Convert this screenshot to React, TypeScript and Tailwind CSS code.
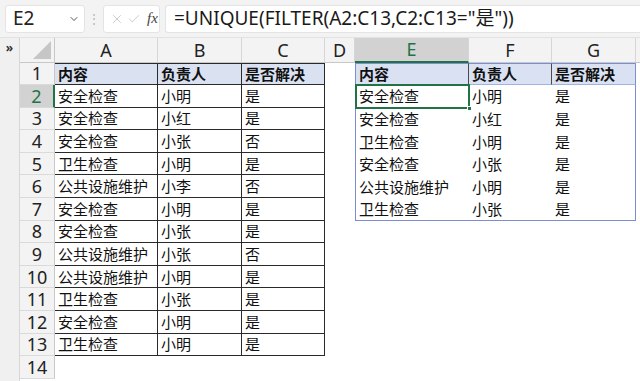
import { ChevronDown, X, Check } from 'lucide-react'

const cjk = "font-['Noto_Sans','Noto_Sans_CJK_SC',sans-serif]"

const leftRows = [
  ['安全检查', '小明', '是'],
  ['安全检查', '小红', '是'],
  ['安全检查', '小张', '否'],
  ['卫生检查', '小明', '是'],
  ['公共设施维护', '小李', '否'],
  ['安全检查', '小明', '是'],
  ['安全检查', '小张', '是'],
  ['公共设施维护', '小张', '否'],
  ['公共设施维护', '小明', '是'],
  ['卫生检查', '小张', '是'],
  ['安全检查', '小明', '是'],
  ['卫生检查', '小明', '是']
]

const rightRows = [
  ['安全检查', '小明', '是'],
  ['安全检查', '小红', '是'],
  ['卫生检查', '小明', '是'],
  ['安全检查', '小张', '是'],
  ['公共设施维护', '小明', '是'],
  ['卫生检查', '小张', '是']
]

const headers = ['内容', '负责人', '是否解决']
const cols = ['A', 'B', 'C', 'D', 'E', 'F', 'G']
const grid = 'grid grid-cols-[35px_103px_84px_83px_30px_114px_83px_84px_1fr] grid-rows-[100%]'

function RowHeader({ n }: { n: number }) {
  const active = n === 2
  return (
    <div
      className={`flex items-center justify-center text-[18px] leading-none border-b border-[#dadada] ${
        active
          ? 'bg-[#d2d2d2] text-[#217346] border-r-2 border-r-[#217346]'
          : 'bg-[#f3f3f3] text-[#222] border-r border-r-[#c8c8c8]'
      }`}>
      {n}
    </div>
  )
}

function LeftCell({ text, row }: { text?: string; row: number }) {
  if (row > 13) return <div />
  return (
    <div
      className={`flex items-center pl-[3px] text-[15px] leading-[18px] text-[#111] border-r border-b border-[#2a2a2a] ${
        row === 1 ? 'bg-[#dae2f2] font-bold border-t' : 'bg-white'
      }`}>
      {text}
    </div>
  )
}

function RightCell({ text, row, col }: { text?: string; row: number; col: number }) {
  if (row > 7) return <div />
  const head = row === 1
  const selected = row === 2 && col === 0
  let cls = 'relative flex items-center pl-[3px] text-[15px] leading-[18px] text-[#111] '
  if (head) {
    cls += 'bg-[#d9e1f2] font-bold border-b border-b-[#9fb3e0] border-t border-t-[#7b8fcf] '
    cls += col < 2 ? 'border-r border-r-[#4a4a4a] ' : 'border-r border-r-[#7b8fcf] '
  } else {
    cls += 'bg-white '
    if (col === 2) cls += 'border-r border-r-[#7b8fcf] '
    if (row === 7) cls += 'border-b border-b-[#7b8fcf] '
  }
  if (col === 0) cls += 'border-l border-l-[#7b8fcf] '
  if (selected) cls += 'z-10 '
  return (
    <div className={cls}>
      {text}
      {selected && (
        <>
          <div className="absolute top-[-1px] left-[-1px] right-[-1px] bottom-[-1px] border-2 border-[#217346] pointer-events-none" />
          <div className="absolute right-[-3px] bottom-[-3px] w-[5px] h-[5px] bg-[#217346] border border-white" />
        </>
      )}
    </div>
  )
}

export default function App() {
  const rows = Array.from({ length: 14 }, (_, i) => i + 1)
  return (
    <div className={`w-[640px] h-[381px] overflow-hidden bg-white ${cjk}`}>
      <div className="h-[38px] bg-[#f3f3f3] flex items-center pl-[5px] border-b border-[#e2e2e2]">
        <div className="w-[80px] h-[28px] bg-white rounded-[3px] border border-[#e4e4e4] flex items-center justify-between pl-[7px] pr-[4px]">
          <span className="text-[19px] text-[#222] leading-none">E2</span>
          <ChevronDown size={12} color="#555" strokeWidth={2} />
        </div>
        <div className="w-[18px] flex justify-center text-[#b5b5b5] text-[12px]">⋮</div>
        <div className="w-[57px] h-[28px] bg-white rounded-[3px] border border-[#e4e4e4] flex items-center pl-[6px] gap-[3px]">
          <X size={14} color="#c4c4c4" strokeWidth={1.5} />
          <Check size={14} color="#c4c4c4" strokeWidth={1.5} />
          <span className="ml-[3px] text-[15px] italic text-[#444] font-['Liberation_Serif',serif]">fx</span>
        </div>
        <div className="ml-[5px] flex-1 h-[28px] bg-white rounded-l-[3px] border border-r-0 border-[#e4e4e4] flex items-center pl-[8px]">
          <span className="text-[19px] text-[#1a1a1a] leading-none whitespace-nowrap">
            =UNIQUE(FILTER(A2:C13,C2:C13="是"))
          </span>
        </div>
      </div>

      <div className="flex">
        <div className="w-[20px] bg-[#f0f0f0] border-r border-[#d6d6d6] h-[343px] pt-[4px] flex justify-center">
          <span className="text-[12px] font-bold text-[#333] leading-none">»</span>
        </div>
        <div className="flex-1">
          <div className={`${grid} h-[24.5px]`}>
            <div className="bg-[#f3f3f3] border-r border-b border-[#c8c8c8] relative">
              <svg className="absolute right-[3px] bottom-[3px]" width="18" height="18" viewBox="0 0 18 18">
                <polygon points="18,0 18,18 0,18" fill="#c6c6c6" />
              </svg>
            </div>
            {cols.map(c => (
              <div
                key={c}
                className={`flex items-center justify-center text-[18px] leading-none border-r border-[#d6d6d6] ${
                  c === 'E'
                    ? 'bg-[#d2d2d2] text-[#217346] border-b-2 border-b-[#217346]'
                    : 'bg-[#f3f3f3] text-[#222] border-b border-b-[#c8c8c8]'
                }`}>
                {c}
              </div>
            ))}
            <div className="bg-[#f3f3f3] border-b border-[#c8c8c8]" />
          </div>
          {rows.map(r => {
            const left = r === 1 ? headers : leftRows[r - 2]
            const right = r === 1 ? headers : rightRows[r - 2]
            return (
              <div key={r} className={`${grid} h-[22.6px]`}>
                <RowHeader n={r} />
                {[0, 1, 2].map(c => (
                  <LeftCell key={c} text={left?.[c]} row={r} />
                ))}
                <div />
                {[0, 1, 2].map(c => (
                  <RightCell key={c} text={right?.[c]} row={r} col={c} />
                ))}
                <div />
              </div>
            )
          })}
        </div>
      </div>
    </div>
  )
}
